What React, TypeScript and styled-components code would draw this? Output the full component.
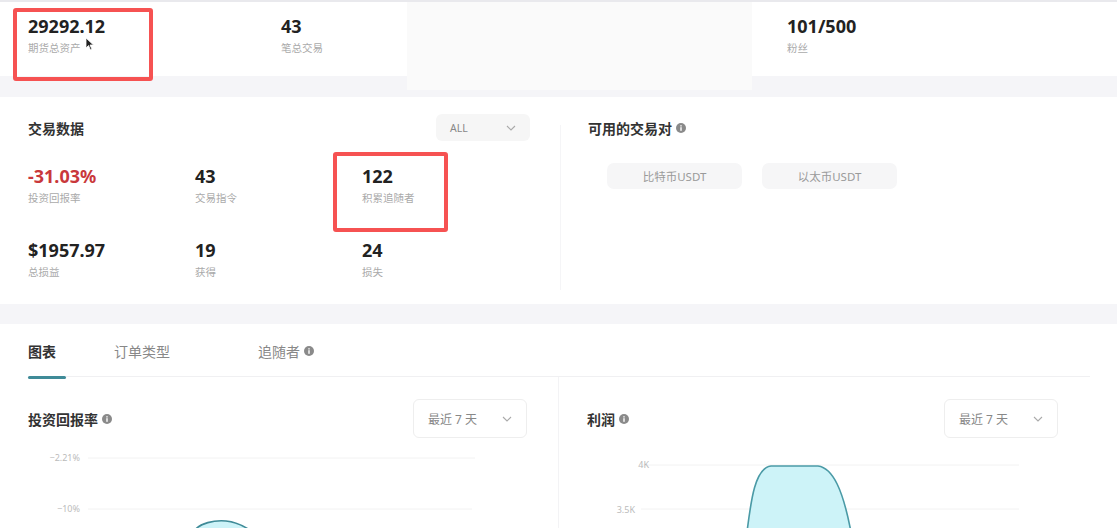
import React from "react";
import styled, { createGlobalStyle } from "styled-components";

const Global = createGlobalStyle`
  html, body { margin: 0; padding: 0; background: #f5f5f8; overflow: hidden; }
  body { font-family: "Noto Sans", "Noto Sans CJK SC", sans-serif; color: #222; }
  * { box-sizing: border-box; }
`;

const Page = styled.div`
  position: relative;
  width: 1117px;
  height: 528px;
  border-top: 2px solid #e9e9ed;
  overflow: hidden;
`;

const TopRow = styled.div`
  display: flex;
  align-items: flex-start;
  margin-bottom: 7px;
`;

const TopCell = styled.div<{ $w?: number; $pl?: number }>`
  ${(p) => (p.$w ? `width: ${p.$w}px;` : "flex: 1;")}
  height: 74px;
  background: #fff;
  padding: 13px 0 0 ${(p) => p.$pl ?? 28}px;
`;

const GrayBlock = styled.div`
  width: 345px;
  height: 88px;
  background: #fafafa;
`;

const Value = styled.div<{ $neg?: boolean }>`
  font-size: 18px;
  font-weight: 700;
  line-height: 23px;
  color: ${(p) => (p.$neg ? "#c9383b" : "#222")};
`;

const Label = styled.div`
  font-size: 10.5px;
  line-height: 14px;
  color: #aaa;
  margin-top: 3px;
`;

const Card = styled.div<{ $h?: number }>`
  background: #fff;
  ${(p) => (p.$h ? `height: ${p.$h}px;` : "")}
`;

const DataCard = styled(Card)`
  display: flex;
  margin-bottom: 20px;
`;

const LeftSection = styled.div`
  width: 560px;
  padding: 17px 30px 0 28px;
`;

const RightSection = styled.div`
  flex: 1;
  display: flex;
  padding: 28px 0 14px 0;
`;

const VLine = styled.div`
  width: 1px;
  background: #f5f5f7;
`;

const RightInner = styled.div`
  flex: 1;
  padding: 6px 0 0 27px;
  margin-top: -17px;
`;

const HeaderRow = styled.div`
  display: flex;
  align-items: center;
  justify-content: space-between;
  height: 27px;
`;

const Title = styled.div`
  font-size: 14px;
  font-weight: 600;
  color: #333;
  display: flex;
  align-items: center;
  gap: 4px;
`;

const Select = styled.div<{ $w: number; $h: number; $bordered?: boolean }>`
  width: ${(p) => p.$w}px;
  height: ${(p) => p.$h}px;
  display: flex;
  align-items: center;
  justify-content: space-between;
  padding: 0 14px;
  border-radius: 6px;
  font-size: ${(p) => (p.$bordered ? 12 : 10.5)}px;
  color: #888;
  background: ${(p) => (p.$bordered ? "#fff" : "#f6f6f6")};
  border: ${(p) => (p.$bordered ? "1px solid #eeeeee" : "none")};
`;

const StatGrid = styled.div`
  display: grid;
  grid-template-columns: 167px 167px 167px;
  row-gap: 34px;
  margin-top: 24px;
`;

const Stat = styled.div``;

const Chips = styled.div`
  display: flex;
  gap: 20px;
  padding-left: 19px;
  margin-top: 22px;
`;

const Chip = styled.div`
  width: 135px;
  height: 26px;
  border-radius: 7px;
  background: #f6f6f7;
  color: #9a9a9a;
  font-size: 11.5px;
  display: flex;
  align-items: center;
  justify-content: center;
`;

const TabBar = styled.div`
  display: flex;
  margin: 0 27px 0 28px;
  height: 53px;
  border-bottom: 1px solid #f0f0f2;
`;

const Tab = styled.div<{ $w: number; $active?: boolean }>`
  position: relative;
  width: ${(p) => p.$w}px;
  margin-top: 16px;
  height: 22px;
  font-size: 14px;
  font-weight: ${(p) => (p.$active ? 600 : 400)};
  color: ${(p) => (p.$active ? "#333" : "#888")};
  display: flex;
  align-items: center;
  gap: 4px;
`;

const Underline = styled.div`
  position: absolute;
  left: 0;
  top: 36px;
  width: 38px;
  height: 3px;
  border-radius: 2px;
  background: #3f8b98;
`;

const ChartRow = styled.div`
  display: flex;
`;

const ChartPanel = styled.div<{ $divider?: boolean; $pr: number }>`
  width: ${(p) => (p.$divider ? 559 : 558)}px;
  padding: 22px ${(p) => p.$pr}px 0 28px;
  ${(p) => (p.$divider ? "border-left: 1px solid #f3f3f5;" : "")}
`;

const ChartHeader = styled.div`
  display: flex;
  align-items: center;
  justify-content: space-between;
  height: 39px;
`;

const ChartSvg = styled.svg`
  display: block;
  margin-left: -28px;
`;

const Annotation = styled.div<{ $x: number; $y: number; $w: number; $h: number }>`
  position: absolute;
  left: ${(p) => p.$x}px;
  top: ${(p) => p.$y}px;
  width: ${(p) => p.$w}px;
  height: ${(p) => p.$h}px;
  border: 4px solid #f65252;
  border-radius: 3px;
  pointer-events: none;
`;

const Cursor = styled.svg`
  position: absolute;
  left: 85px;
  top: 35px;
`;

const Info = () => (
  <svg width="10" height="10" viewBox="0 0 10 10">
    <circle cx="5" cy="5" r="5" fill="#8a8a8a" />
    <rect x="4.3" y="4.2" width="1.4" height="3.6" fill="#fff" />
    <rect x="4.3" y="2.2" width="1.4" height="1.3" fill="#fff" />
  </svg>
);

const Chevron = () => (
  <svg width="10" height="6" viewBox="0 0 10 6">
    <path d="M1 1 L5 5 L9 1" fill="none" stroke="#aaa" strokeWidth="1.1" />
  </svg>
);

export default function App() {
  return (
    <>
      <Global />
      <Page>
        <TopRow>
          <TopCell $w={253}>
            <Value>29292.12</Value>
            <Label>期货总资产</Label>
          </TopCell>
          <TopCell $w={154}>
            <Value>43</Value>
            <Label>笔总交易</Label>
          </TopCell>
          <GrayBlock />
          <TopCell $pl={35}>
            <Value>101/500</Value>
            <Label>粉丝</Label>
          </TopCell>
        </TopRow>

        <DataCard $h={207}>
          <LeftSection>
            <HeaderRow>
              <Title>交易数据</Title>
              <Select $w={94} $h={27}>
                <span>ALL</span>
                <Chevron />
              </Select>
            </HeaderRow>
            <StatGrid>
              <Stat>
                <Value $neg>-31.03%</Value>
                <Label>投资回报率</Label>
              </Stat>
              <Stat>
                <Value>43</Value>
                <Label>交易指令</Label>
              </Stat>
              <Stat>
                <Value>122</Value>
                <Label>积累追随者</Label>
              </Stat>
              <Stat>
                <Value>$1957.97</Value>
                <Label>总损益</Label>
              </Stat>
              <Stat>
                <Value>19</Value>
                <Label>获得</Label>
              </Stat>
              <Stat>
                <Value>24</Value>
                <Label>损失</Label>
              </Stat>
            </StatGrid>
          </LeftSection>
          <RightSection>
            <VLine />
            <RightInner>
              <HeaderRow>
                <Title>
                  可用的交易对 <Info />
                </Title>
              </HeaderRow>
              <Chips>
                <Chip>比特币USDT</Chip>
                <Chip>以太币USDT</Chip>
              </Chips>
            </RightInner>
          </RightSection>
        </DataCard>

        <Card>
          <TabBar>
            <Tab $w={86} $active>
              图表
              <Underline />
            </Tab>
            <Tab $w={144}>订单类型</Tab>
            <Tab $w={120}>
              追随者 <Info />
            </Tab>
          </TabBar>
          <ChartRow>
            <ChartPanel $pr={31}>
              <ChartHeader>
                <Title>
                  投资回报率 <Info />
                </Title>
                <Select $w={114} $h={39} $bordered>
                  <span>最近 7 天</span>
                  <Chevron />
                </Select>
              </ChartHeader>
              <ChartSvg width="558" height="90" viewBox="0 438 558 90">
                <text x="80" y="461" fontSize="9" fill="#bbb" textAnchor="end" fontFamily="Noto Sans, sans-serif">−2.21%</text>
                <line x1="88" y1="458" x2="475" y2="458" stroke="#f2f2f2" />
                <text x="80" y="512" fontSize="9" fill="#bbb" textAnchor="end" fontFamily="Noto Sans, sans-serif">−10%</text>
                <line x1="88" y1="509" x2="472" y2="509" stroke="#f2f2f2" />
                <path d="M194 531 C200 523 214 520 226 521 C238 522 246 527 254 533 Z" fill="#cdf3f8" stroke="#3f8b98" strokeWidth="1.6" />
              </ChartSvg>
            </ChartPanel>
            <ChartPanel $divider $pr={59}>
              <ChartHeader>
                <Title>
                  利润 <Info />
                </Title>
                <Select $w={114} $h={39} $bordered>
                  <span>最近 7 天</span>
                  <Chevron />
                </Select>
              </ChartHeader>
              <ChartSvg width="557" height="90" viewBox="560 438 557 90">
                <line x1="642" y1="465" x2="1020" y2="465" stroke="#f2f2f2" />
                <text x="650" y="468" fontSize="9" fill="#bbb" textAnchor="end" fontFamily="Noto Sans, sans-serif">4K</text>
                <line x1="642" y1="509" x2="1020" y2="509" stroke="#f2f2f2" />
                <text x="636" y="513" fontSize="9" fill="#bbb" textAnchor="end" fontFamily="Noto Sans, sans-serif">3.5K</text>
                <path d="M748 532 C752 500 756 468 772 466 L819 466 C834 468 844 490 852 532 Z" fill="#cdf3f8" stroke="#4a9aa6" strokeWidth="1.6" />
              </ChartSvg>
            </ChartPanel>
          </ChartRow>
        </Card>

        <Annotation $x={13} $y={6} $w={140} $h={73} />
        <Annotation $x={333} $y={150} $w={115} $h={80} />
        <Cursor width="10" height="14" viewBox="0 0 10 14">
          <path d="M1 1 L1 11 L3.5 8.5 L5.5 13 L7 12.3 L5 8 L8.5 8 Z" fill="#222" stroke="#fff" strokeWidth="0.8" />
        </Cursor>
      </Page>
    </>
  );
}
